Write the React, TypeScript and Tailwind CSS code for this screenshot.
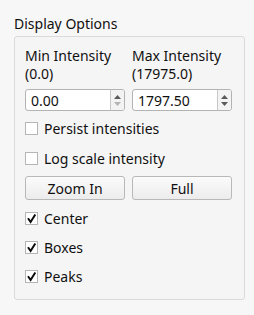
import React from "react"

const font = { fontFamily: '"Noto Sans", "Open Sans", sans-serif' }

const SpinBox = ({ value, downDisabled }: { value: string; downDisabled?: boolean }) => (
  <div className="flex h-[22px] w-[100px] rounded-[3px] border border-[#b3b3b3] bg-white overflow-hidden">
    <div className="flex-1 flex items-center pl-[5px] text-[14px] text-[#101010]">{value}</div>
    <div className="w-[14px] border-l border-[#c8c8c8] bg-[#f3f3f3] flex flex-col items-center justify-center gap-[3px]">
      <svg width="7" height="4" viewBox="0 0 7 4">
        <path d="M3.5 0 L7 4 L0 4 Z" fill="#5a5a5a" />
      </svg>
      <svg width="7" height="4" viewBox="0 0 7 4">
        <path d="M0 0 L7 0 L3.5 4 Z" fill={downDisabled ? "#b4b4b4" : "#5a5a5a"} />
      </svg>
    </div>
  </div>
)

const Check = ({ label, checked }: { label: string; checked?: boolean }) => (
  <div className="flex items-center h-[22px] gap-[6px]">
    <div className="w-[13px] h-[13px] border border-[#b5b5b5] bg-white flex items-center justify-center">
      {checked && (
        <svg width="11" height="11" viewBox="0 0 11 11">
          <path d="M2 5.2 L4.6 9 L9.3 1.5" fill="none" stroke="#0a0a0a" strokeWidth="2" />
        </svg>
      )}
    </div>
    <span className="text-[14px] text-[#101010]">{label}</span>
  </div>
)

const Btn = ({ label }: { label: string }) => (
  <button className="h-[24px] w-[100px] rounded-[3px] border border-[#b8b8b8] bg-gradient-to-b from-[#fbfbfb] to-[#ececec] text-[14px] text-[#101010]">
    {label}
  </button>
)

export default function App() {
  return (
    <div className="w-[254px] h-[315px] bg-[#f7f7f7] pt-[14px]" style={font}>
      <div className="ml-[14px] h-[20px] leading-[20px] text-[14px] text-[#101010]">Display Options</div>
      <div className="ml-[14px] mt-[2px] w-[231px] rounded-[3px] border border-[#dadada] bg-[#f5f5f5] pl-[10px] pt-[10px] pb-[12px]">
        <div className="flex gap-[7px]">
          <div className="flex flex-col w-[100px]">
            <div className="text-[14px] leading-[18px] text-[#101010] h-[42px]">
              Min Intensity
              <br />
              (0.0)
            </div>
            <SpinBox value="0.00" downDisabled />
          </div>
          <div className="flex flex-col w-[100px]">
            <div className="text-[14px] leading-[18px] text-[#101010] h-[42px]">
              Max Intensity
              <br />
              (17975.0)
            </div>
            <SpinBox value="1797.50" />
          </div>
        </div>
        <div className="mt-[6px]">
          <Check label="Persist intensities" />
        </div>
        <div className="mt-[8px]">
          <Check label="Log scale intensity" />
        </div>
        <div className="flex gap-[7px] mt-[7px]">
          <Btn label="Zoom In" />
          <Btn label="Full" />
        </div>
        <div className="mt-[7px]">
          <Check label="Center" checked />
        </div>
        <div className="mt-[7px]">
          <Check label="Boxes" checked />
        </div>
        <div className="mt-[7px]">
          <Check label="Peaks" checked />
        </div>
      </div>
    </div>
  )
}
